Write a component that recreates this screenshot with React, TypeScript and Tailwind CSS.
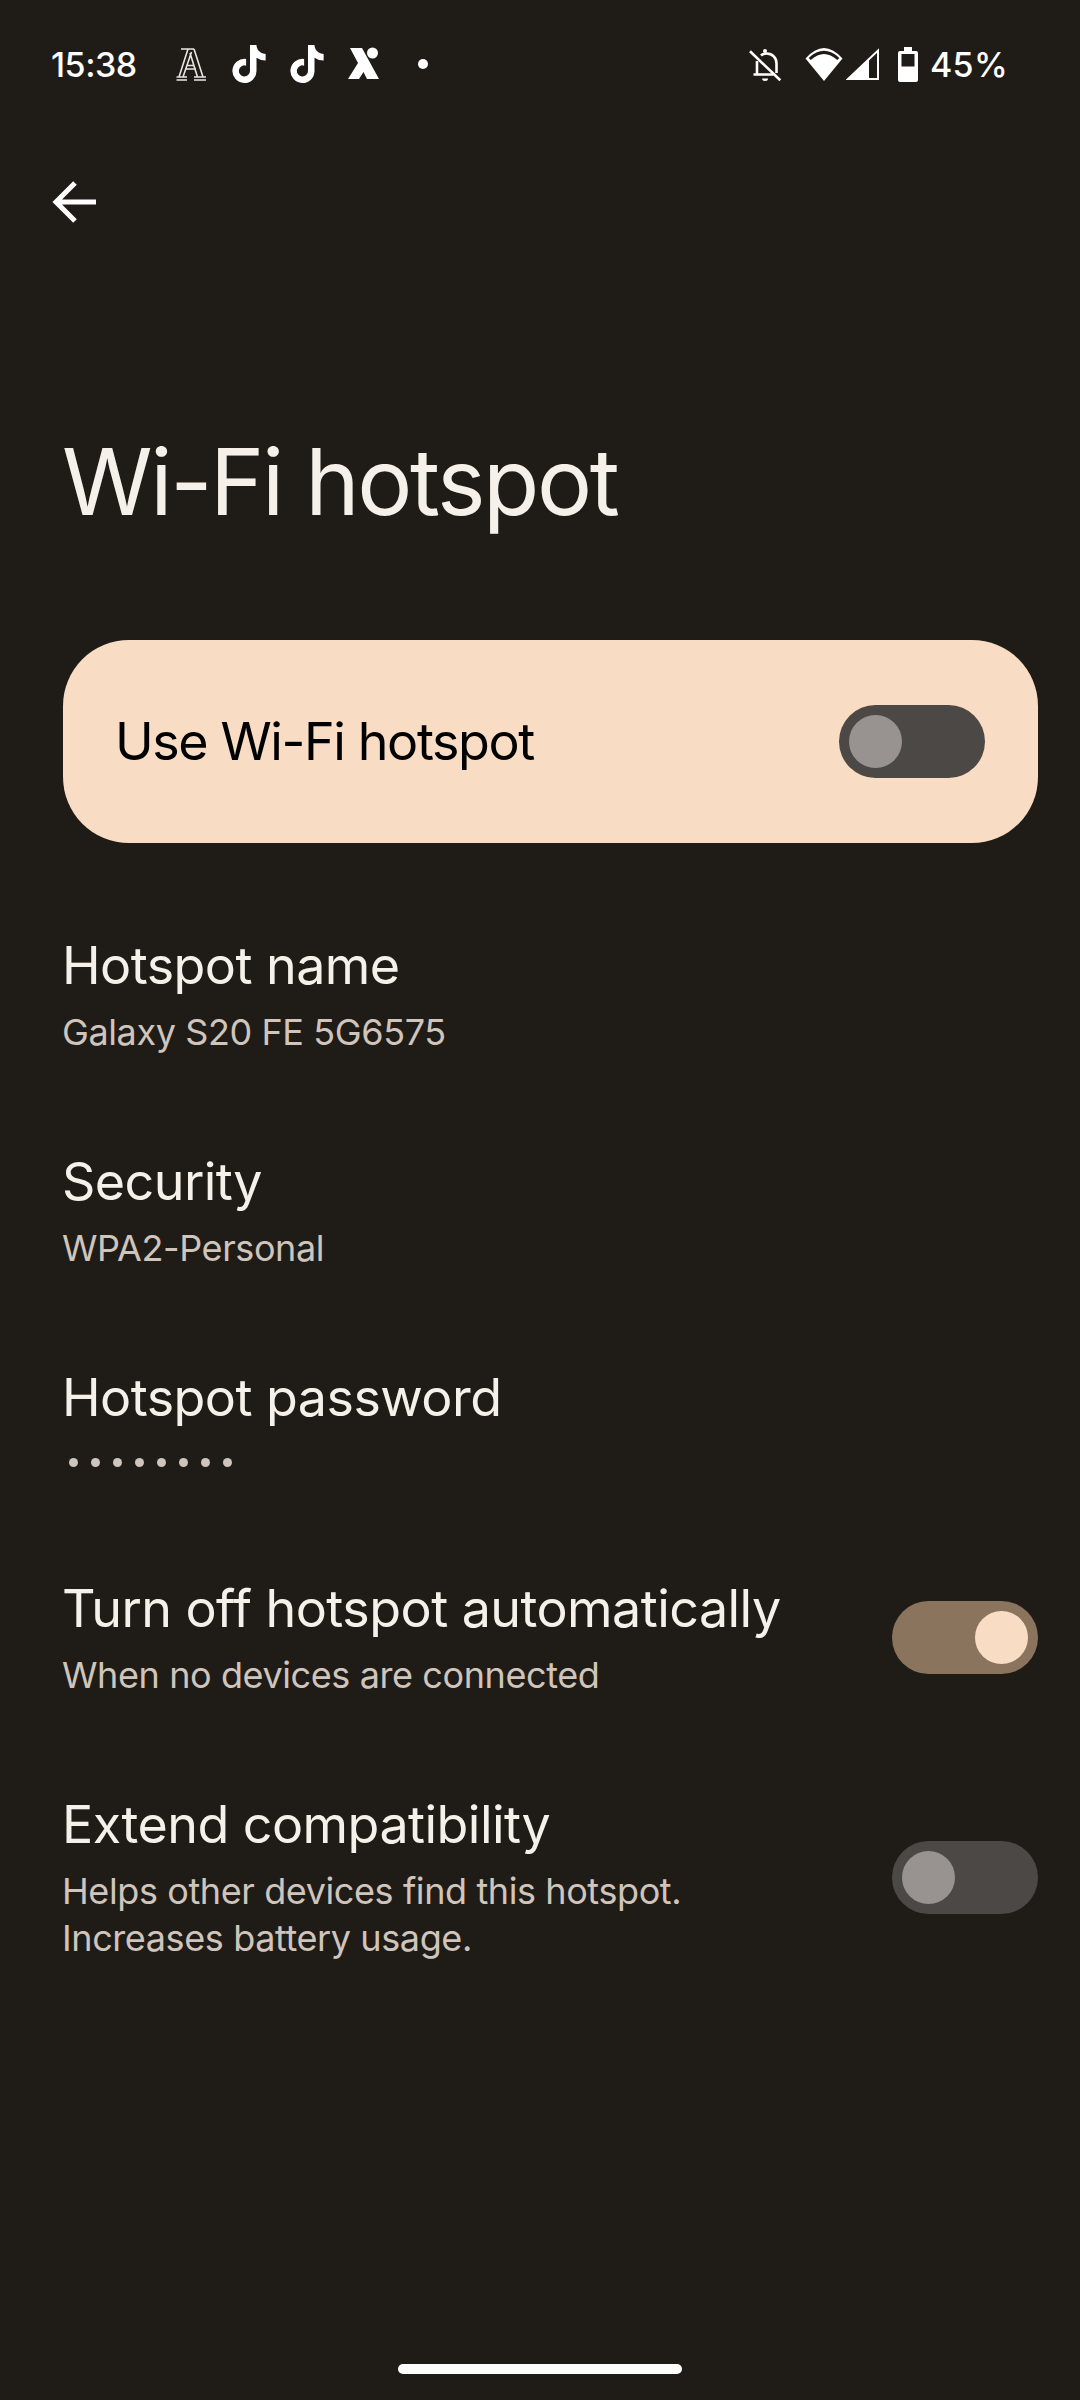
import React from "react";
import { FaTiktok } from "react-icons/fa6";

type SwitchProps = {
  on?: boolean;
};

const Switch = ({ on }: SwitchProps) => {
  return (
    <div
      className={`flex h-[73px] w-[146px] shrink-0 items-center rounded-full px-[10px] ${
        on ? "justify-end bg-[#8b745d]" : "justify-start bg-[#4c4845]"
      }`}
    >
      <div
        className={`h-[53px] w-[53px] rounded-full ${on ? "bg-[#f8dcc3]" : "bg-[#989390]"}`}
      />
    </div>
  );
};

type RowProps = {
  title: string;
  children: React.ReactNode;
  toggle?: React.ReactNode;
};

const Row = ({ title, children, toggle }: RowProps) => {
  return (
    <div className="flex items-center justify-between pb-[46px] pl-[62px] pr-[42px] pt-[47px]">
      <div>
        <div className="text-[52px] leading-[66px] tracking-[-0.55px] text-[#f6f0ea]">{title}</div>
        <div className="mt-[10px] text-[36px] leading-[47px] tracking-[-0.4px] text-[#cfc5bc]">{children}</div>
      </div>
      {toggle}
    </div>
  );
};

const StatusBar = () => {
  return (
    <div className="flex h-[128px] items-center justify-between pl-[51px] pr-[72px]">
      <div className="flex items-center">
        <span className="w-[125px] text-[34px] font-medium tracking-[-0.5px] text-white">15:38</span>
        {/* app notification icons */}
        <svg className="h-[33px] w-[30px]" viewBox="0 0 30 33" fill="none" stroke="#e8e6e3" strokeWidth="1.6">
          <path d="M5 1h13M12 1 3 29M15.500 4 7 29M18 1l9 28M14 5l7.500 24M9 21h11M10.500 17.500h8M0.500 29H11M0.500 32H11M18 29h12M18 32h12" />
        </svg>
        <FaTiktok className="ml-[24px] text-[38px] text-white" />
        <FaTiktok className="ml-[20px] text-[38px] text-white" />
        <svg className="ml-[21px] h-[34px] w-[33px]" viewBox="0 0 33 34" fill="white">
          <path d="M3 1h12l17 31H20l-3.500-7-4.500 7H1l10-16L3 1Z" />
          <circle cx="25.500" cy="6" r="5.500" />
        </svg>
        <div className="ml-[38px] h-[10px] w-[10px] rounded-full bg-white" />
      </div>
      <div className="flex items-center">
        <svg className="h-[36px] w-[34px]" viewBox="0 0 34 36" fill="none" stroke="white" strokeWidth="2.6">
          <path d="M1 5.300 31.300 34.300" />
          <path d="M12 9.500C13.500 8 15.500 7.500 17.500 7.500c6 0 10 4.500 10 10V27M8 15v13.500M4.500 28.500h20" />
          <circle cx="16" cy="5" r="2" fill="white" stroke="none" />
          <path d="M13 32.500a3 2.500 0 0 0 6 0Z" fill="white" stroke="none" />
        </svg>
        <svg className="ml-[22px] h-[33px] w-[38px]" viewBox="0 0 38 33">
          <path d="M19 33 0.500 10.500Q19-10.500 37.500 10.500L19 33Z" fill="white" />
          <path d="M4.700 11Q19-2.400 33.300 11" fill="none" stroke="#1f1c18" strokeWidth="3" />
        </svg>
        <svg className="ml-[3px] h-[32px] w-[33px]" viewBox="0 0 33 32">
          <path d="M32 2.500V31H2L32 2.500Z" fill="none" stroke="white" strokeWidth="2" />
          <path d="M23 11v21H1L23 11Z" fill="white" />
        </svg>
        <svg className="ml-[19px] h-[35px] w-[20px]" viewBox="0 0 20 35">
          <path d="M6 0h8v4h4a2 2 0 0 1 2 2v27a2 2 0 0 1-2 2H2a2 2 0 0 1-2-2V6a2 2 0 0 1 2-2h4V0Z" fill="white" />
          <rect x="3.500" y="7" width="13" height="12.500" fill="#1f1c18" />
        </svg>
        <span className="ml-[12px] text-[34px] font-medium tracking-[0.3px] text-white">45%</span>
      </div>
    </div>
  );
};

const App = () => {
  return (
    <div className="flex h-[2400px] w-[1080px] flex-col bg-[#1f1c18] font-['Inter','Noto_Sans',sans-serif]">
      <StatusBar />
      {/* back arrow */}
      <div className="pl-[51px] pt-[52px]">
        <svg className="h-[44px] w-[46px]" viewBox="0 0 46 44" fill="none" stroke="white" strokeWidth="5">
          <path d="M45 22H5M24 3 5 22l19 19" />
        </svg>
      </div>
      <h1 className="mt-[204px] pl-[62px] text-[92px] leading-[108px] tracking-[-2.4px] text-[#f6f0ea]">Wi-Fi hotspot</h1>
      <div className="ml-[63px] mr-[42px] mt-[104px] flex h-[203px] items-center justify-between rounded-[66px] bg-[#f8dcc3] pl-[52px] pr-[53px]">
        <span className="text-[52px] tracking-[-1.4px] text-black">Use Wi-Fi hotspot</span>
        <Switch />
      </div>
      <div className="mt-[43px]">
        <Row title="Hotspot name">Galaxy S20 FE 5G6575</Row>
        <Row title="Security">WPA2-Personal</Row>
        <Row title="Hotspot password">
          <div className="flex h-[42px] items-center gap-[13px] pl-[7px]">
            {[1, 2, 3, 4, 5, 6, 7, 8].map((i) => (
              <div key={i} className="h-[9px] w-[9px] rounded-full bg-[#cfc5bc]" />
            ))}
          </div>
        </Row>
        <Row title="Turn off hotspot automatically" toggle={<Switch on />}>
          When no devices are connected
        </Row>
        <Row title="Extend compatibility" toggle={<Switch />}>
          Helps other devices find this hotspot.
          <br />
          Increases battery usage.
        </Row>
      </div>
      <div className="mb-[26px] mt-auto flex justify-center">
        <div className="h-[10px] w-[284px] rounded-full bg-white" />
      </div>
    </div>
  );
};

export default App;
